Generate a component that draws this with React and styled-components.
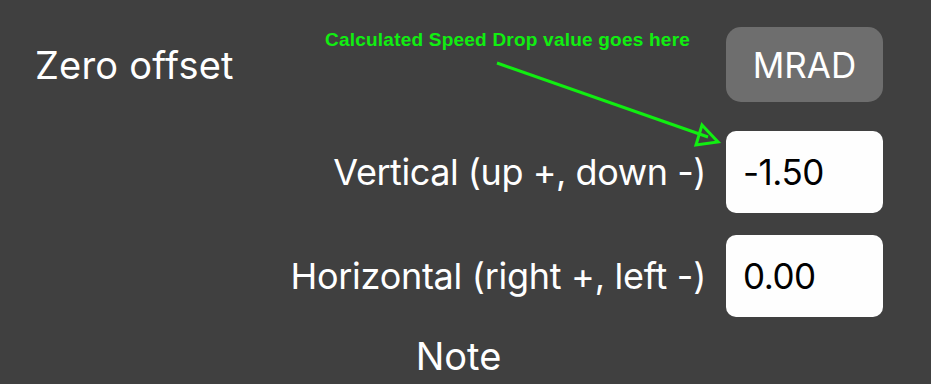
import React from "react";
import styled, { createGlobalStyle } from "styled-components";

const Global = createGlobalStyle`
  html, body { margin: 0; padding: 0; background: #404040; }
  body { font-family: Inter, "Noto Sans", sans-serif; color: #ffffff; }
`;

const Page = styled.div`
  position: relative;
  width: 931px;
  height: 384px;
  overflow: hidden;
  background: #404040;
  box-sizing: border-box;
  padding: 27px 48px 0 35px;
  display: flex;
  flex-direction: column;
`;

const Header = styled.div`
  display: flex;
  align-items: center;
  justify-content: space-between;
  height: 75px;
`;

const Title = styled.div`
  font-size: 38px;
  font-weight: 400;
  letter-spacing: 0.2px;
`;

const UnitButton = styled.button`
  width: 157px;
  height: 75px;
  border: none;
  border-radius: 15px;
  background: #6e6e6e;
  color: #ffffff;
  font-family: Inter, "Noto Sans", sans-serif;
  font-size: 35px;
  padding: 0;
`;

const Fields = styled.div`
  display: flex;
  flex-direction: column;
  gap: 22px;
  margin-top: 29px;
`;

const Row = styled.div`
  display: flex;
  align-items: center;
  justify-content: flex-end;
  gap: 20px;
`;

const Label = styled.div`
  font-size: 36px;
  letter-spacing: ${(p) => p.$tracking}px;
  text-align: right;
`;

const ValueBox = styled.div`
  width: 157px;
  height: 82px;
  box-sizing: border-box;
  background: #fefefe;
  border-radius: 10px;
  color: #000;
  font-size: 35px;
  display: flex;
  align-items: center;
  padding-left: 17px;
  letter-spacing: -0.5px;
`;

const Note = styled.div`
  margin-top: 16px;
  font-size: 38px;
  text-align: center;
  width: 847px;
`;

const Annotation = styled.div`
  position: absolute;
  left: 325px;
  top: 29px;
  font-family: "Liberation Sans", Arial, sans-serif;
  font-weight: 700;
  font-size: 19px;
  letter-spacing: 0.22px;
  color: #11ee11;
  white-space: nowrap;
`;

const ArrowSvg = styled.svg`
  position: absolute;
  left: 0;
  top: 0;
  pointer-events: none;
`;

export default function App() {
  return (
    <>
      <Global />
      <Page>
        <Header>
          <Title>Zero offset</Title>
          <UnitButton>MRAD</UnitButton>
        </Header>
        <Fields>
          <Row>
            <Label $tracking={-0.45}>Vertical (up +, down -)</Label>
            <ValueBox>-1.50</ValueBox>
          </Row>
          <Row>
            <Label $tracking={-0.28}>Horizontal (right +, left -)</Label>
            <ValueBox>0.00</ValueBox>
          </Row>
        </Fields>
        <Note>Note</Note>
        <Annotation>Calculated Speed Drop value goes here</Annotation>
        <ArrowSvg width="931" height="384" viewBox="0 0 931 384">
          <line x1="497" y1="63" x2="708" y2="137" stroke="#11ee11" strokeWidth="3" />
          <polygon points="702,125 718,142 696,145" fill="none" stroke="#11ee11" strokeWidth="3" strokeLinejoin="miter" />
        </ArrowSvg>
      </Page>
    </>
  );
}
